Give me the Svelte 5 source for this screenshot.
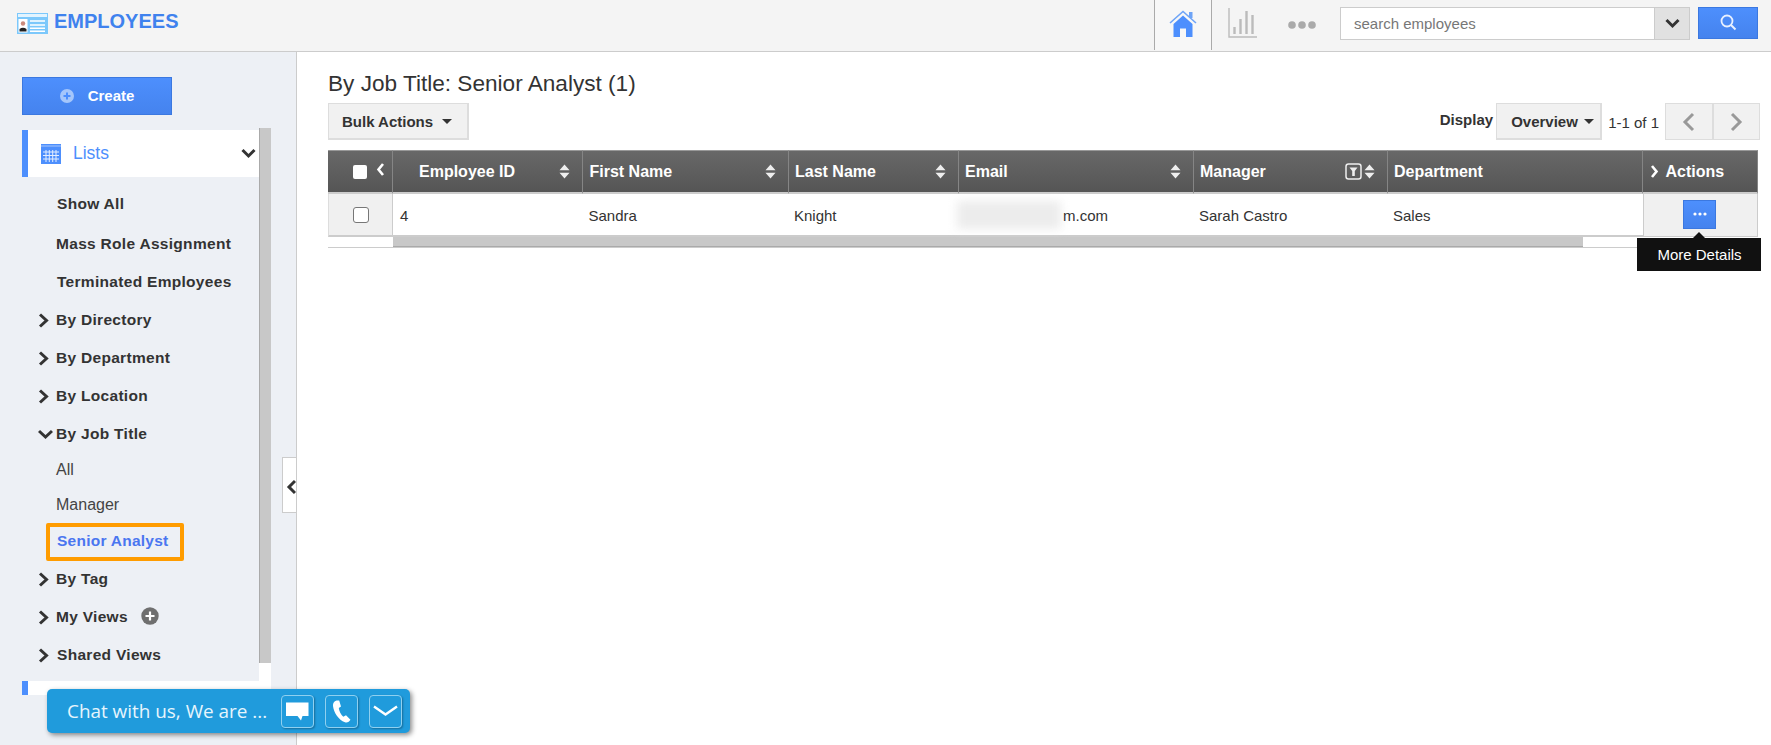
<script>
	const menu_top = [
		{ label: 'Show All', cls: 'first' },
		{ label: 'Mass Role Assignment', cls: 'shift' },
		{ label: 'Terminated Employees' }
	]
	const groups_a = ['By Directory', 'By Department', 'By Location']
	const columns = [
		{ label: 'Employee ID', sort: true },
		{ label: 'First Name', sort: true, cls: 'nudge' },
		{ label: 'Last Name', sort: true },
		{ label: 'Email', sort: true },
		{ label: 'Manager', sort: true, filter: true },
		{ label: 'Department' }
	]
</script>

{#snippet chevron_right()}
	<svg class="chev" width="11" height="15" viewBox="0 0 11 15"><path d="M2 1.5 L8.5 7.5 L2 13.5" fill="none" stroke="#333" stroke-width="3" /></svg>
{/snippet}

{#snippet sort_icon()}
	<svg width="11" height="15" viewBox="0 0 11 15"><path d="M5.5 0.5 L10.5 6.3 H0.5 Z M5.5 14.5 L10.5 8.7 H0.5 Z" fill="#eee" /></svg>
{/snippet}

<div class="page">
	<header class="topbar">
		<div class="brand">
			<svg width="31" height="21" viewBox="0 0 31 21">
				<rect width="31" height="21" fill="#7cc8fb" />
				<rect x="1" y="1" width="29" height="3" fill="#e2f4ff" />
				<rect x="1.5" y="6" width="9" height="13.5" fill="#fff" />
				<circle cx="6" cy="10.5" r="2.2" fill="#c98a7c" />
				<path d="M2.5 18.5 V16 Q6 13.5 9.500 16 V18.500 Z" fill="#222" />
				<path d="M13 8 H28 M13 12 H28 M13 15.300 H28 M13 18.300 H28" stroke="#fff" stroke-width="1.500" />
			</svg>
			<span>EMPLOYEES</span>
		</div>
		<div class="top_right">
			<div class="home_tab">
				<svg width="28" height="27" viewBox="0 0 28 27">
					<path d="M1 13 L14 1.5 L27 13" fill="none" stroke="#6ea4f7" stroke-width="1.6" />
					<rect x="20" y="2" width="3.5" height="6" fill="#6ea4f7" />
					<path d="M4.5 14 L14 5.5 L23.5 14 V27 H17 V18.5 H11 V27 H4.5 Z" fill="#4d8ffd" />
				</svg>
			</div>
			<svg class="chart" width="29" height="30" viewBox="0 0 29 30">
				<path d="M1 0 V29 H29" fill="none" stroke="#bbb" stroke-width="1.4" />
				<path d="M6.5 26 V19 M12.5 26 V11 M18.5 26 V3 M24.5 26 V7" stroke="#bbb" stroke-width="2.4" />
			</svg>
			<svg class="dots" width="28" height="8" viewBox="0 0 28 8">
				<circle cx="4" cy="4" r="3.8" fill="#aaa" /><circle cx="14" cy="4" r="3.8" fill="#aaa" /><circle cx="24" cy="4" r="3.8" fill="#aaa" />
			</svg>
			<div class="search">
				<div class="search_input">search employees</div>
				<div class="search_drop">
					<svg width="15" height="11" viewBox="0 0 15 11"><path d="M1.5 2 L7.5 8 L13.5 2" fill="none" stroke="#333" stroke-width="3" /></svg>
				</div>
			</div>
			<button class="search_btn" aria-label="search">
				<svg width="17" height="17" viewBox="0 0 17 17"><circle cx="7" cy="7" r="5.5" fill="none" stroke="#e8f0ff" stroke-width="1.8" /><path d="M11 11 L15.5 15.5" stroke="#e8f0ff" stroke-width="2" /></svg>
			</button>
		</div>
	</header>

	<div class="body_row">
		<aside class="sidebar">
			<button class="create">
				<svg width="14" height="14" viewBox="0 0 14 14"><circle cx="7" cy="7" r="7" fill="#a5c6fb" /><path d="M7 3.5 V10.5 M3.5 7 H10.5" stroke="#4d8ffd" stroke-width="2" /></svg>
				<span>Create</span>
			</button>
			<div class="scroll_area">
				<div class="track"><div class="thumb"></div></div>
				<div class="panel">
					<div class="lists_head">
						<svg width="20" height="20" viewBox="0 0 20 20">
							<rect width="20" height="20" fill="#4d8ffd" />
							<path d="M0 2 H20" stroke="#a9c8fc" stroke-width="1" />
							<path d="M2 8 H18 M2 11.500 H18 M2 15 H18 M5 6 V18 M8.300 6 V18 M11.700 6 V18 M15 6 V18" stroke="#e3edff" stroke-width="1" />
						</svg>
						<span>Lists</span>
						<svg class="lists_chev" width="15" height="11" viewBox="0 0 15 11"><path d="M1.5 2 L7.5 8 L13.5 2" fill="none" stroke="#333" stroke-width="3" /></svg>
					</div>
					{#each menu_top as item}
						<div class="item bold {item.cls || ''}">{item.label}</div>
					{/each}
					{#each groups_a as g}
						<div class="item bold group">{@render chevron_right()}{g}</div>
					{/each}
					<div class="item bold group">
						<svg class="chev" width="15" height="11" viewBox="0 0 15 11"><path d="M1 2 L7.5 8 L14 2" fill="none" stroke="#333" stroke-width="3" /></svg>By Job Title
					</div>
					<div class="item sub all">All</div>
					<div class="item sub mgr">Manager</div>
					<div class="item sel_row"><span class="selected">Senior Analyst</span></div>
					<div class="item bold group">{@render chevron_right()}By Tag</div>
					<div class="item bold group">
						{@render chevron_right()}My Views
						<svg class="plus" width="18" height="18" viewBox="0 0 18 18"><circle cx="9" cy="9" r="8.7" fill="#6f6f6f" /><path d="M9 4.5 V13.5 M4.5 9 H13.5" stroke="#fff" stroke-width="2.2" /></svg>
					</div>
					<div class="item bold group shared">{@render chevron_right()}Shared Views</div>
					<div class="next_head"></div>
				</div>
			</div>
			<div class="collapse">
				<svg width="10" height="16" viewBox="0 0 10 16"><path d="M9 2 L3 8 L9 14" fill="none" stroke="#333" stroke-width="3" /></svg>
			</div>
		</aside>

		<main class="content">
			<h1>By Job Title: Senior Analyst (1)</h1>
			<div class="toolbar">
				<button class="tool_btn bulk">Bulk Actions <i class="caret"></i></button>
				<div class="pager">
					<b>Display</b>
					<button class="tool_btn over">Overview <i class="caret"></i></button>
					<span class="count">1-1 of 1</span>
					<div class="nav_btns">
						<button aria-label="previous"><svg width="13" height="20" viewBox="0 0 13 20"><path d="M11 2 L3 10 L11 18" fill="none" stroke="#999" stroke-width="3" /></svg></button>
						<button aria-label="next"><svg width="13" height="20" viewBox="0 0 13 20"><path d="M2 2 L10 10 L2 18" fill="none" stroke="#999" stroke-width="3" /></svg></button>
					</div>
				</div>
			</div>

			<div class="grid">
				<div class="th first_col">
					<i class="head_check"></i>
					<svg class="head_chev" width="9" height="15" viewBox="0 0 9 15"><path d="M7 2 L2.500 7.500 L7 13" fill="none" stroke="#fff" stroke-width="2.600" /></svg>
				</div>
				{#each columns as col}
					<div class="th {col.cls || ''}">
						<span class="th_label">{col.label}</span>
						{#if col.filter}
							<svg class="filter" width="17" height="17" viewBox="0 0 17 17"><rect x="1" y="1" width="15" height="15" rx="2.5" fill="none" stroke="#eee" stroke-width="1.500" /><path d="M4.500 4.500 H12.500 L9.800 8 V13 H7.200 V8 Z" fill="#eee" /></svg>
						{/if}
						{#if col.sort}{@render sort_icon()}{/if}
					</div>
				{/each}
				<div class="th actions_th">
					<svg width="9" height="15" viewBox="0 0 9 15"><path d="M2 2 L6.500 7.500 L2 13" fill="none" stroke="#fff" stroke-width="2.600" /></svg>
					<span class="th_label">Actions</span>
				</div>

				<div class="td check_col"><i class="row_check"></i></div>
				<div class="td id_col">4</div>
				<div class="td first_name">Sandra</div>
				<div class="td">Knight</div>
				<div class="td email"><span class="blur"></span><span class="email_tail">m.com</span></div>
				<div class="td">Sarah Castro</div>
				<div class="td">Sales</div>
				<div class="td act">
					<button class="more" aria-label="more details">
						<svg width="14" height="4" viewBox="0 0 14 4"><circle cx="2" cy="2" r="1.6" fill="#fff" /><circle cx="7" cy="2" r="1.6" fill="#fff" /><circle cx="12" cy="2" r="1.6" fill="#fff" /></svg>
					</button>
					<div class="tooltip">More Details</div>
				</div>
			</div>
			<div class="hscroll"><div class="hscroll_thumb"></div></div>
		</main>
	</div>

	<div class="chat">
		<span class="chat_text">Chat with us, We are ...</span>
		<div class="chat_btn">
			<svg width="23" height="19" viewBox="0 0 23 19"><path d="M0 0.500 H22.500 V14 H16.500 L15 18.500 L11.500 14 H0 Z" fill="#fff" /></svg>
		</div>
		<div class="chat_btn">
			<svg width="19" height="23" viewBox="0 0 19 23"><path d="M4.500 0.500 C2 1.200 0.800 3 1 6 C1.800 12.500 6.500 20 13 22.300 C15.300 23 17.300 21.800 18.500 19.800 L14 15.300 L11.300 16.800 C9 14.800 7 11 6.800 8 L9 6.500 L7.200 0.500 Z" fill="#fff" /></svg>
		</div>
		<div class="chat_btn">
			<svg width="25" height="12" viewBox="0 0 25 12"><path d="M1 1.500 L12.500 9.500 L24 1.500" fill="none" stroke="#fff" stroke-width="2.400" /></svg>
		</div>
	</div>
</div>

<style>
	:global(body) {
		margin: 0;
		overflow: hidden;
		background: #fff;
	}
	.page {
		width: 1771px;
		height: 745px;
		position: relative;
		overflow: hidden;
		font-family: "Liberation Sans", Arial, sans-serif;
		font-size: 15px;
		color: #333;
	}
	button {
		font-family: inherit;
		cursor: pointer;
	}
	.topbar {
		height: 51px;
		background: #f4f4f4;
		border-bottom: 1px solid #ccc;
		display: flex;
		justify-content: space-between;
	}
	.brand {
		display: flex;
		align-items: flex-start;
		gap: 6px;
		padding: 13px 0 0 17px;
		color: #3f82ee;
		font-weight: bold;
		font-size: 20px;
		line-height: 17px;
	}
	.top_right {
		display: flex;
		align-items: flex-start;
		padding-right: 13px;
	}
	.home_tab {
		width: 58px;
		height: 50px;
		margin-right: 16px;
		background: #f7f7f7;
		border-left: 1px solid #aaa;
		border-right: 1px solid #aaa;
		display: flex;
		justify-content: center;
		padding-top: 10px;
		box-sizing: border-box;
	}
	.chart {
		margin-top: 8px;
		margin-right: 31px;
	}
	.dots {
		margin-top: 21px;
		margin-right: 24px;
	}
	.search {
		display: flex;
		margin-top: 7px;
		width: 350px;
		height: 33px;
		box-sizing: border-box;
		border: 1px solid #ccc;
		background: #fff;
	}
	.search_input {
		flex: 1;
		padding-left: 13px;
		line-height: 31px;
		color: #777;
	}
	.search_drop {
		width: 34px;
		background: #e1e1e1;
		border-left: 1px solid #ccc;
		display: flex;
		align-items: center;
		justify-content: center;
	}
	.search_btn {
		margin: 7px 0 0 8px;
		width: 60px;
		height: 32px;
		background: linear-gradient(#4d8ffd, #4583ee);
		border: 1px solid #3b78e0;
		padding: 2px 0 0;
	}
	.body_row {
		display: flex;
		height: 693px;
	}
	.sidebar {
		flex: none;
		background: #edf0f5;
		border-right: 1px solid #ccc;
		position: relative;
		padding: 25px 0 0 22px;
		box-sizing: border-box;
		width: 297px;
	}
	.create {
		display: flex;
		align-items: center;
		justify-content: center;
		gap: 14px;
		width: 150px;
		height: 38px;
		color: #fff;
		font-weight: bold;
		font-size: 15px;
		background: linear-gradient(#4d8ffd, #4583ee);
		border: 1px solid #3b78e0;
		padding: 0;
	}
	.create span {
		margin-top: -2px;
	}
	.scroll_area {
		position: relative;
		margin-top: 13px;
		width: 249px;
		height: 567px;
	}
	.track {
		position: absolute;
		left: 237px;
		top: 0;
		width: 12px;
		height: 100%;
		background: #fff;
	}
	.thumb {
		height: 535px;
		box-sizing: border-box;
		background: #c8c8c8;
		border-left: 1px solid #aaa;
	}
	.panel {
		width: 237px;
		padding-top: 2px;
	}
	.lists_head {
		height: 47px;
		background: #fff;
		border-left: 6px solid #4d8ffd;
		display: flex;
		align-items: center;
		padding-left: 13px;
		color: #4d8ffd;
		font-size: 17.5px;
	}
	.lists_head span {
		margin-left: 12px;
	}
	.lists_chev {
		margin-left: auto;
		margin-right: 3px;
	}
	.item {
		height: 38px;
		display: flex;
		align-items: center;
		padding-left: 34px;
		position: relative;
	}
	.bold {
		font-weight: bold;
		font-size: 15.5px;
		letter-spacing: .3px;
		color: #333;
	}
	.first {
		margin-top: 8px;
		padding-left: 35px;
	}
	.shift {
		margin-top: 2px;
	}
	.item:nth-child(4) {
		padding-left: 35px;
	}
	.chev {
		position: absolute;
		left: 16px;
	}
	.sub {
		color: #444;
		font-size: 16px;
	}
	.all {
		height: 34px;
	}
	.mgr {
		height: 36px;
	}
	.sel_row {
		height: 37px;
		padding-left: 24px;
		align-items: flex-start;
	}
	.selected {
		display: block;
		box-sizing: border-box;
		height: 38px;
		margin-top: 0;
		padding: 2px 12px 0 7px;
		line-height: 24px;
		border: 4px solid #ff9c00;
		border-radius: 2px;
		color: #4a76f0;
		font-weight: bold;
		font-size: 15.5px;
		letter-spacing: .25px;
		white-space: nowrap;
	}
	.plus {
		margin-left: 13px;
		margin-top: -2px;
	}
	.shared {
		padding-left: 35px;
	}
	.next_head {
		height: 14px;
		margin-top: 7px;
		background: #fff;
		border-left: 6px solid #4d8ffd;
	}
	.collapse {
		position: absolute;
		left: 282px;
		top: 405px;
		width: 14px;
		height: 56px;
		background: #fff;
		border: 1px solid #ccc;
		border-right: none;
		box-sizing: border-box;
		display: flex;
		align-items: center;
		justify-content: flex-end;
		padding-top: 4px;
	}
	.content {
		flex: 1;
		padding: 0 11px 0 31px;
		min-width: 0;
	}
	h1 {
		margin: 0;
		height: 51px;
		box-sizing: border-box;
		padding-top: 19px;
		font-weight: normal;
		font-size: 22.6px;
		line-height: 26px;
		color: #333;
	}
	.toolbar {
		display: flex;
		justify-content: space-between;
		height: 47px;
	}
	.tool_btn {
		height: 37px;
		background: #f1f1f1;
		border: 1px solid #ddd;
		border-bottom-width: 2px;
		border-right-width: 2px;
		color: #333;
		font-weight: bold;
		font-size: 15px;
		padding: 0;
		display: flex;
		align-items: center;
	}
	.bulk {
		width: 141px;
		padding-left: 13px;
		gap: 9px;
	}
	.over {
		width: 106px;
		padding-left: 14px;
		gap: 6px;
	}
	.caret {
		display: block;
		width: 0;
		height: 0;
		border-left: 5px solid transparent;
		border-right: 5px solid transparent;
		border-top: 5px solid #333;
	}
	.pager {
		display: flex;
		align-items: flex-start;
	}
	.pager b {
		margin: 8px 3px 0 0;
		font-size: 15px;
	}
	.count {
		margin: 11px 6px 0 6px;
	}
	.nav_btns {
		display: flex;
	}
	.nav_btns button {
		width: 47.5px;
		height: 37px;
		background: #f1f1f1;
		border: 1px solid #ddd;
		padding: 0;
		display: flex;
		align-items: center;
		justify-content: center;
	}
	.grid {
		display: grid;
		grid-template-columns: 65px 189.5px 206.5px 170px 235px 194px 254.5px 115px;
		width: 1429.5px;
	}
	.th {
		height: 44px;
		box-sizing: border-box;
		background: linear-gradient(#686868, #555);
		border-right: 1px solid #858585;
		border-bottom: 2px solid #ccc;
		border-top: 1px solid #999;
		display: flex;
		align-items: center;
		padding: 0 12px 0 6px;
		color: #fff;
		font-weight: bold;
		font-size: 16px;
		gap: 2px;
	}
	.th:last-child {
		border-right: none;
	}
	.th_label {
		flex: 1;
	}
	.th:nth-child(2) {
		padding-left: 26px;
	}
	.th.nudge {
		padding-left: 7px;
	}
	.first_col {
		padding: 0 0 2px 25px;
		position: relative;
	}
	.head_check {
		display: block;
		width: 14px;
		height: 14px;
		background: #fff;
		border-radius: 2px;
		margin-top: 3px;
	}
	.head_chev {
		position: absolute;
		left: 48px;
		top: 11px;
	}
	.actions_th {
		padding-left: 7px;
		gap: 7px;
	}
	.td {
		height: 43px;
		box-sizing: border-box;
		border-bottom: 2px solid #ccc;
		display: flex;
		align-items: center;
		padding: 2px 0 0 5px;
		position: relative;
		background: #fff;
		color: #333;
	}
	.check_col {
		background: #f0f0f0;
		border-left: 1px solid #ddd;
		border-right: 1px solid #ccc;
		padding: 0 0 0 24px;
	}
	.row_check {
		display: block;
		width: 16px;
		height: 16px;
		box-sizing: border-box;
		background: #fff;
		border: 1px solid #777;
		border-radius: 3px;
	}
	.id_col {
		padding-left: 7px;
	}
	.first_name {
		padding-left: 6px;
	}
	.email {
		padding-left: 0;
	}
	.blur {
		position: absolute;
		left: -2px;
		top: 7px;
		width: 104px;
		height: 28px;
		background: #ececec;
		filter: blur(5px);
	}
	.email_tail {
		margin-left: 104px;
		position: relative;
	}
	.act {
		background: #f0f0f0;
		border: 1px solid #ccc;
		border-top: none;
		padding: 0;
		justify-content: center;
		overflow: visible;
	}
	.more {
		width: 33px;
		height: 29px;
		background: linear-gradient(#4d8ffd, #4583ee);
		border: 1px solid #3b78e0;
		padding: 0;
		display: flex;
		align-items: center;
		justify-content: center;
		margin-bottom: 2px;
		margin-right: 1px;
	}
	.tooltip {
		position: absolute;
		z-index: 2;
		left: -7px;
		top: 44px;
		width: 124px;
		height: 33px;
		box-sizing: border-box;
		padding-left: 2px;
		background: #111;
		color: #fff;
		line-height: 33px;
		text-align: center;
	}
	.tooltip::before {
		content: '';
		position: absolute;
		left: 56px;
		top: -6px;
		border-left: 6px solid transparent;
		border-right: 6px solid transparent;
		border-bottom: 6px solid #111;
	}
	.hscroll {
		height: 11px;
		width: 1429.5px;
		box-sizing: border-box;
		border-bottom: 1px solid #ccc;
		padding-left: 65px;
	}
	.hscroll_thumb {
		width: 1190px;
		height: 10px;
		background: #c8c8c8;
		border-bottom: 1px solid #aaa;
		box-sizing: border-box;
	}
	.chat {
		position: absolute;
		left: 47px;
		top: 689px;
		width: 363px;
		height: 44px;
		box-sizing: border-box;
		background: #209bdc;
		border-radius: 5px;
		box-shadow: 2px 2px 5px rgba(0, 0, 0, .45);
		display: flex;
		align-items: center;
		padding-left: 20px;
		gap: 11px;
		color: #e6f5fd;
	}
	.chat_text {
		font-family: "Open Sans", sans-serif;
		font-size: 18.9px;
		width: 203px;
		white-space: nowrap;
	}
	.chat_btn {
		width: 33px;
		height: 33px;
		box-sizing: border-box;
		border: 1px solid #8fd0f0;
		border-radius: 4px;
		box-shadow: 1px 1px 2px rgba(0, 0, 0, .3);
		display: flex;
		align-items: center;
		justify-content: center;
	}
</style>
